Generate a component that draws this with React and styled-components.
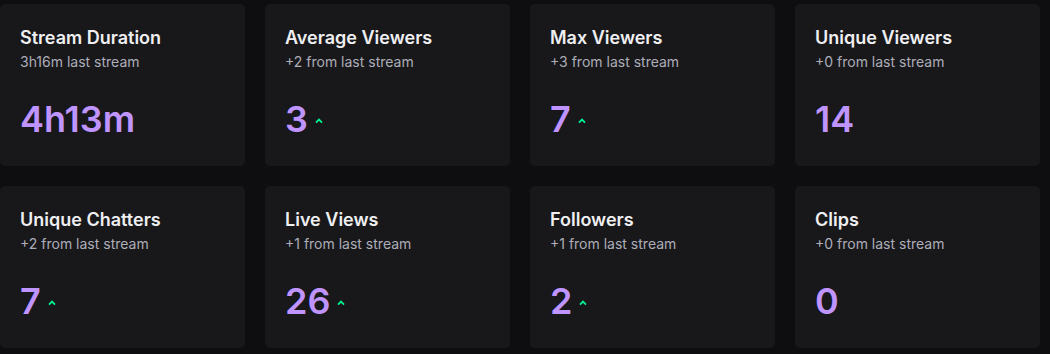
import styled, { createGlobalStyle } from 'styled-components';

const GlobalStyle = createGlobalStyle`
  body {
    margin: 0;
    background: #0e0e10;
    font-family: Inter, "Noto Sans", sans-serif;
  }
`;

const Grid = styled.div`
  display: grid;
  grid-template-columns: repeat(4, 245px);
  gap: 20px;
  padding-top: 4px;
`;

const Card = styled.div`
  background: #18181b;
  border-radius: 5px;
  height: 162px;
  box-sizing: border-box;
  padding: 22px 20px 0;
  display: flex;
  flex-direction: column;
`;

const Title = styled.h3`
  margin: 0;
  color: #efeff1;
  font-size: 18px;
  font-weight: 600;
  line-height: 24px;
`;

const Sub = styled.p`
  margin: 2px 0 0;
  color: #adadb8;
  font-size: 14px;
  line-height: 20px;
`;

const ValueRow = styled.div`
  display: flex;
  align-items: center;
  gap: 7px;
  margin-top: 25px;
`;

const Value = styled.span`
  color: #bf94ff;
  font-size: 36px;
  font-weight: 600;
  line-height: 44px;
`;

const Up = () => (
  <svg width="8" height="6" viewBox="0 0 8 6" style={{ marginTop: 3 }}>
    <path d="M1 4.6 L4 1.6 L7 4.6" fill="none" stroke="#00f593" strokeWidth="1.8" />
  </svg>
);

const stats = [
  { title: 'Stream Duration', sub: '3h16m last stream', value: '4h13m' },
  { title: 'Average Viewers', sub: '+2 from last stream', value: '3', up: true },
  { title: 'Max Viewers', sub: '+3 from last stream', value: '7', up: true },
  { title: 'Unique Viewers', sub: '+0 from last stream', value: '14' },
  { title: 'Unique Chatters', sub: '+2 from last stream', value: '7', up: true },
  { title: 'Live Views', sub: '+1 from last stream', value: '26', up: true },
  { title: 'Followers', sub: '+1 from last stream', value: '2', up: true },
  { title: 'Clips', sub: '+0 from last stream', value: '0' },
];

export default function App() {
  return (
    <>
      <GlobalStyle />
      <Grid>
        {stats.map((s) => (
          <Card key={s.title}>
            <Title>{s.title}</Title>
            <Sub>{s.sub}</Sub>
            <ValueRow>
              <Value>{s.value}</Value>
              {s.up && <Up />}
            </ValueRow>
          </Card>
        ))}
      </Grid>
    </>
  );
}
